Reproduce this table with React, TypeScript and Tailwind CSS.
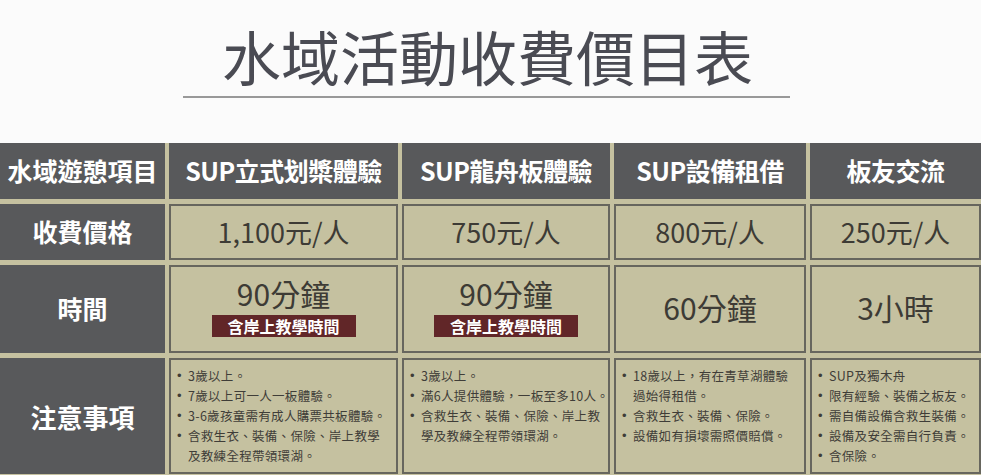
const columns = [
  { name: "SUP立式划槳體驗", price: "1,100元/人", time: "90分鐘", badge: true },
  { name: "SUP龍舟板體驗", price: "750元/人", time: "90分鐘", badge: true },
  { name: "SUP設備租借", price: "800元/人", time: "60分鐘", badge: false },
  { name: "板友交流", price: "250元/人", time: "3小時", badge: false },
];

// each note is a list of visual lines (wrapping follows the original table)
const notes: string[][][] = [
  [["3歲以上。"], ["7歲以上可一人一板體驗。"], ["3-6歲孩童需有成人購票共板體驗。"], ["含救生衣、裝備、保險、岸上教學", "及教練全程帶領環湖。"]],
  [["3歲以上。"], ["滿6人提供體驗，一板至多10人。"], ["含救生衣、裝備、保險、岸上教", "學及教練全程帶領環湖。"]],
  [["18歲以上，有在青草湖體驗", "過始得租借。"], ["含救生衣、裝備、保險。"], ["設備如有損壞需照價賠償。"]],
  [["SUP及獨木舟"], ["限有經驗、裝備之板友。"], ["需自備設備含救生裝備。"], ["設備及安全需自行負責。"], ["含保險。"]],
];

const Label = ({ children, big }: { children: React.ReactNode; big?: boolean }) => (
  <div
    className={`flex items-center justify-center bg-[#58595b] font-bold text-white ${
      big ? "text-[26px]" : "text-[25px]"
    }`}
  >
    {children}
  </div>
);

const Cell = ({ children, className = "" }: { children: React.ReactNode; className?: string }) => (
  <div className={`border-2 border-[#67665e] bg-[#c5c1a0] ${className}`}>{children}</div>
);

export default function App() {
  return (
    <div className="h-[475px] w-[981px] overflow-hidden bg-[#fbfbfb] font-['Noto_Sans_CJK_TC',sans-serif]">
      <div className="flex flex-col items-center pt-[26px]">
        <h1 className="mr-[6px] text-[59px] leading-none font-normal text-[#4a4b53]">水域活動收費價目表</h1>
        <div className="mt-[11px] mr-[9px] h-[2px] w-[607px] bg-[#999999]" />
      </div>

      <div className="mt-[45px] grid grid-cols-[165px_229px_208px_192px_171px] grid-rows-[56px_56px_88px_116px] gap-x-[4px] gap-y-[5px] bg-[#c5c1a0] pb-[4px]">
        {/* header */}
        <Label>水域遊憩項目</Label>
        {columns.map((c) => (
          <div
            key={c.name}
            className="flex items-center justify-center bg-[#58595b] text-[25px] font-bold tracking-[-0.5px] text-white"
          >
            {c.name}
          </div>
        ))}

        {/* price */}
        <Label>收費價格</Label>
        {columns.map((c) => (
          <Cell key={c.name} className="flex items-center justify-center text-[27px] text-[#3d3b35]">
            {c.price}
          </Cell>
        ))}

        {/* time */}
        <Label>時間</Label>
        {columns.map((c) => (
          <Cell
            key={c.name}
            className={`flex flex-col items-center justify-center gap-[5px] text-[#3d3b35] ${c.badge ? "pb-[6px]" : "pb-[4px]"}`}
          >
            <span className="text-[30px] leading-[34px]">{c.time}</span>
            {c.badge && (
              <span className="flex h-[22px] w-[144px] items-center justify-center bg-[#612628] text-[16px] leading-none font-bold text-white">
                含岸上教學時間
              </span>
            )}
          </Cell>
        ))}

        {/* notes */}
        <Label big>注意事項</Label>
        {notes.map((list, i) => (
          <Cell key={i} className="px-[6px] pt-[6px] text-[12.5px] leading-[20px] tracking-[0.3px] text-[#3f3d38]">
            {list.map((lines, j) => (
              <div key={j} className="flex">
                <span className="w-[11px] shrink-0 font-['Liberation_Sans',sans-serif] text-[13px]">•</span>
                <span>
                  {lines.map((l, k) => (
                    <span key={k} className="block whitespace-nowrap">
                      {l}
                    </span>
                  ))}
                </span>
              </div>
            ))}
          </Cell>
        ))}
      </div>
    </div>
  );
}
